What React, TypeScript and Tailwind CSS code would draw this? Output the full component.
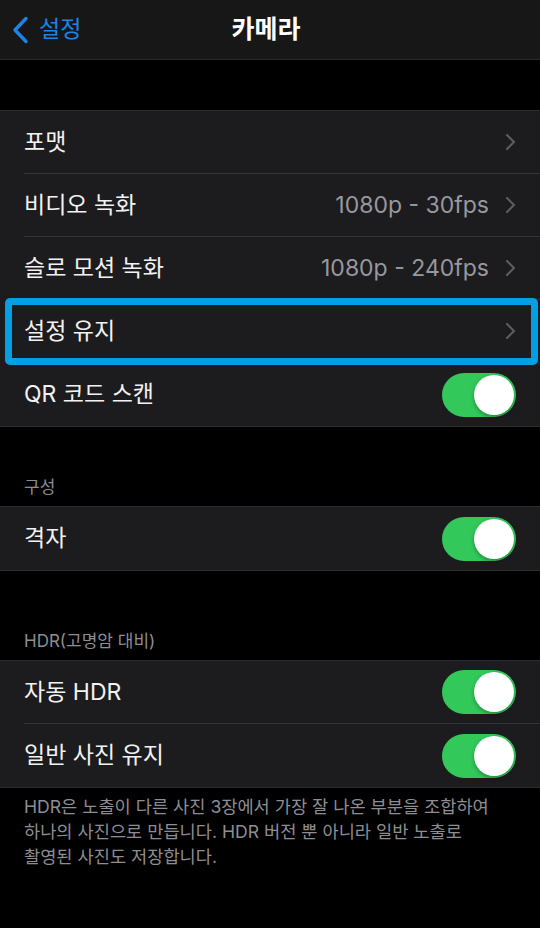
import { ReactNode } from 'react';

const font = { fontFamily: '"Inter", "Noto Sans CJK KR", sans-serif' };

function Chevron() {
    return (
        <svg width="11" height="18" viewBox="0 0 11 18" className="shrink-0">
            <path d="M2 2l7 7-7 7" fill="none" stroke="#5b5b60" strokeWidth="2.2" strokeLinecap="round" strokeLinejoin="round" />
        </svg>
    );
}

function Toggle() {
    return (
        <div className="w-[74px] h-[44px] rounded-full bg-[#32c85a] p-[2px] flex justify-end shrink-0">
            <div className="w-[40px] h-[40px] rounded-full bg-white shadow-[0_2px_4px_rgba(0,0,0,0.3)]" />
        </div>
    );
}

function Row({ label, value, toggle, last, highlight }: { label: string; value?: string; toggle?: boolean; last?: boolean; highlight?: boolean }) {
    return (
        <div className="relative h-[63px] pl-6 flex">
            <div className={`flex-1 flex items-center pr-6 ${last ? '' : 'border-b border-[#343437]'}`}>
                <span className="text-[23px] text-[#f2f2f2] flex-1">{label}</span>
                {value && <span className="text-[23px] text-[#98989e] mr-4">{value}</span>}
                {toggle ? <Toggle /> : <Chevron />}
            </div>
            {highlight && (
                <div className="absolute left-[5px] right-[2px] -top-[2px] -bottom-[2px] border-[7px] border-[#019fe3] rounded-[5px] pointer-events-none" />
            )}
        </div>
    );
}

function Group({ children }: { children: ReactNode }) {
    return <div className="bg-[#1c1c1e] border-y border-[#2c2c2e]">{children}</div>;
}

function Header({ text, height }: { text: string; height: string }) {
    return (
        <div className={`${height} flex items-end px-6 pb-[9px]`}>
            <span className="text-[17px] leading-5 text-[#8d8d93]">{text}</span>
        </div>
    );
}

export default function App() {
    return (
        <div className="w-[540px] h-[928px] bg-black overflow-hidden" style={font}>
            {/* nav */}
            <div className="relative h-[60px] bg-[#171717] border-b border-[#2a2a2a] flex items-center justify-center">
                <div className="absolute left-3 top-0 h-full flex items-center gap-[10px] text-[#1c84e6]">
                    <svg width="17" height="28" viewBox="0 0 17 28">
                        <path d="M14 2.5L3 14l11 11.5" fill="none" stroke="#1c84e6" strokeWidth="3.4" strokeLinecap="round" strokeLinejoin="round" />
                    </svg>
                    <span className="text-[23px]">설정</span>
                </div>
                <span className="text-[25px] font-bold text-white mr-2">카메라</span>
            </div>

            <div className="h-[50px]" />

            <Group>
                <Row label="포맷" />
                <Row label="비디오 녹화" value="1080p - 30fps" />
                <Row label="슬로 모션 녹화" value="1080p - 240fps" />
                <Row label="설정 유지" highlight />
                <Row label="QR 코드 스캔" toggle last />
            </Group>

            <Header text="구성" height="h-[79px]" />
            <Group>
                <Row label="격자" toggle last />
            </Group>

            <Header text="HDR(고명암 대비)" height="h-[89px]" />
            <Group>
                <Row label="자동 HDR" toggle />
                <Row label="일반 사진 유지" toggle last />
            </Group>

            <p className="px-6 pt-[6px] text-[17.6px] leading-[25px] text-[#8d8d93]">
                HDR은 노출이 다른 사진 3장에서 가장 잘 나온 부분을 조합하여
                <br />
                하나의 사진으로 만듭니다. HDR 버전 뿐 아니라 일반 노출로
                <br />
                촬영된 사진도 저장합니다.
            </p>
        </div>
    );
}
